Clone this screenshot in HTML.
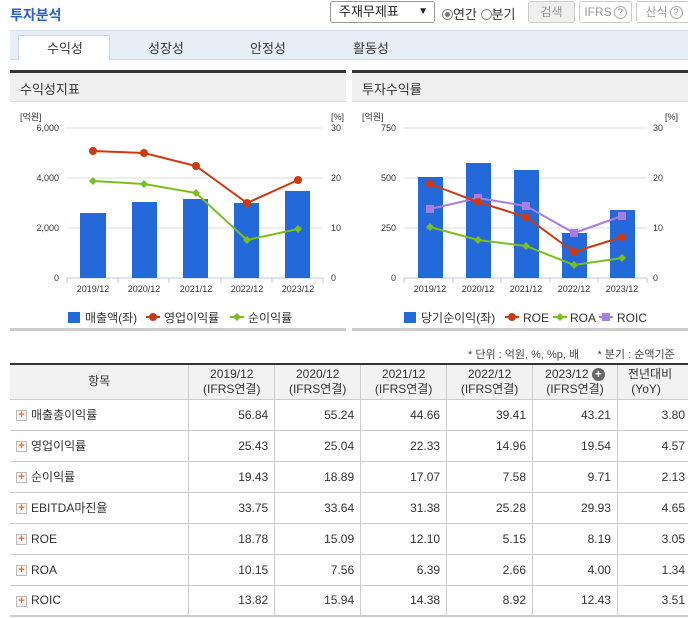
<!DOCTYPE html>
<html><head><meta charset="utf-8"><style>
*{margin:0;padding:0;box-sizing:border-box}
body{width:688px;height:618px;overflow:hidden;background:#fff;font-family:"Liberation Sans","Noto Sans CJK KR",sans-serif;color:#333;position:relative;font-size:12px}
.a{position:absolute}
.btn{position:absolute;top:1px;height:22px;border:1px solid #ccc;border-radius:3px;font-size:12px;color:#999;line-height:20px;text-align:center;background:#fff}
.q{display:inline-block;width:13px;height:13px;border:1px solid #aaa;border-radius:50%;font-size:9px;line-height:11px;color:#888;vertical-align:middle;margin-left:2px}
table{position:absolute;left:10px;top:363px;border-collapse:collapse;width:690px;font-size:12px}
td,th{border:1px solid #ccc;height:31px;padding:0 6px;color:#333}
th{background:#f2f2f2;font-weight:normal;height:35px;line-height:15px;font-size:12px}
td.n{text-align:right}
tr:first-child th{border-top:2px solid #333}
tr:last-child td{border-bottom:2px solid #ccc}
td:first-child,th:first-child{border-left:none}
.pl{display:inline-block;width:11px;height:11px;border:1px solid #bbb;background:#f6f6f6;color:#f26a1b;font-size:11px;line-height:9px;text-align:center;font-weight:bold;vertical-align:middle;margin-right:4px}
</style></head><body>
<div class="a" style="left:10px;top:5px;font-size:14px;font-weight:bold;color:#2a62c9">투자분석</div>
<div class="a" style="left:330px;top:1px;width:105px;height:22px;border:1px solid #999;border-radius:3px;font-size:13px;line-height:20px;padding-left:8px;color:#222">주재무제표<span style="position:absolute;right:6px;font-size:10px">▼</span></div>
<div class="a" style="left:442px;top:4px;font-size:13px;color:#333"><span style="display:inline-block;width:11px;height:11px;border:1px solid #888;border-radius:50%;background:radial-gradient(#777 35%,#fff 45%);vertical-align:-1px"></span>연간 <span style="display:inline-block;width:11px;height:11px;border:1px solid #888;border-radius:50%;vertical-align:-1px"></span>분기</div>
<div class="btn" style="left:528px;width:47px;background:#efefef">검색</div>
<div class="btn" style="left:579px;width:53px">IFRS<span class="q">?</span></div>
<div class="btn" style="left:636px;width:56px">산식<span class="q">?</span></div>
<div class="a" style="left:10px;top:30px;width:678px;height:30px;background:#e8eef8;border-top:1px solid #d8e0ee;border-bottom:1px solid #ccd6e6"></div>
<div class="a" style="left:18px;top:35px;width:92px;height:26px;background:#fff;border:1px solid #ccd6e6;border-bottom:none"></div>
<div class="a" style="left:47px;top:38px;font-size:13px">수익성</div>
<div class="a" style="left:148px;top:38px;font-size:13px">성장성</div>
<div class="a" style="left:250px;top:38px;font-size:13px">안정성</div>
<div class="a" style="left:353px;top:38px;font-size:13px">활동성</div>
<div class="a" style="left:10px;top:70px;width:336px;height:32px;border-top:3px solid #333;background:#f0f0f0;border-bottom:1px solid #ddd;font-size:13px;padding:6px 0 0 10px">수익성지표</div>
<div class="a" style="left:352px;top:70px;width:336px;height:32px;border-top:3px solid #333;background:#f0f0f0;border-bottom:1px solid #ddd;font-size:13px;padding:6px 0 0 10px">투자수익률</div>
<div class="a" style="left:10px;top:328px;width:336px;height:3px;background:#ccc"></div>
<div class="a" style="left:352px;top:328px;width:336px;height:3px;background:#ccc"></div>
<svg class="a" style="left:0;top:0" width="688" height="340" font-family="Liberation Sans,Noto Sans CJK KR,sans-serif" font-size="9" fill="#333">
<g stroke="#ddd"><line x1="67" x2="323" y1="128" y2="128"/><line x1="67" x2="323" y1="178" y2="178"/><line x1="67" x2="323" y1="228" y2="228"/>
<line x1="404" x2="647" y1="128" y2="128"/><line x1="404" x2="647" y1="178" y2="178"/><line x1="404" x2="647" y1="228" y2="228"/></g>
<g stroke="#b8c8dc"><line x1="67" x2="323" y1="278" y2="278"/><line x1="404" x2="647" y1="278" y2="278"/>
<line x1="67" x2="67" y1="278" y2="283"/><line x1="118" x2="118" y1="278" y2="283"/><line x1="169" x2="169" y1="278" y2="283"/><line x1="221" x2="221" y1="278" y2="283"/><line x1="272" x2="272" y1="278" y2="283"/><line x1="323" x2="323" y1="278" y2="283"/>
<line x1="404" x2="404" y1="278" y2="283"/><line x1="453" x2="453" y1="278" y2="283"/><line x1="501" x2="501" y1="278" y2="283"/><line x1="550" x2="550" y1="278" y2="283"/><line x1="598" x2="598" y1="278" y2="283"/><line x1="647" x2="647" y1="278" y2="283"/></g>
<g fill="#2469d9"><rect x="80" y="213" width="26" height="65"/><rect x="132" y="202" width="25" height="76"/><rect x="183" y="199" width="25" height="79"/><rect x="234" y="203" width="25" height="75"/><rect x="285" y="191" width="25" height="87"/>
<rect x="418" y="177" width="25" height="101"/><rect x="466" y="163" width="25" height="115"/><rect x="514" y="170" width="25" height="108"/><rect x="562" y="233" width="25" height="45"/><rect x="610" y="210" width="25" height="68"/></g>
<polyline points="93,151 144,153 196,166 247,203 298,180" fill="none" stroke="#d0380f" stroke-width="2"/>
<g fill="#d0380f"><circle cx="93" cy="151" r="4"/><circle cx="144" cy="153" r="4"/><circle cx="196" cy="166" r="4"/><circle cx="247" cy="203" r="4"/><circle cx="298" cy="180" r="4"/></g>
<polyline points="93,181 144,184 196,193 247,240 298,229" fill="none" stroke="#7cbf1c" stroke-width="2"/>
<g fill="#7cbf1c"><path d="M93 177l4 4-4 4-4-4z"/><path d="M144 180l4 4-4 4-4-4z"/><path d="M196 189l4 4-4 4-4-4z"/><path d="M247 236l4 4-4 4-4-4z"/><path d="M298 225l4 4-4 4-4-4z"/></g>
<polyline points="430,209 478,198 526,206 574,233 622,216" fill="none" stroke="#a87ee0" stroke-width="2"/>
<g fill="#a87ee0"><rect x="426" y="205" width="8" height="8"/><rect x="474" y="194" width="8" height="8"/><rect x="522" y="202" width="8" height="8"/><rect x="570" y="229" width="8" height="8"/><rect x="618" y="212" width="8" height="8"/></g>
<polyline points="430,184 478,202 526,217 574,252 622,237" fill="none" stroke="#d0380f" stroke-width="2"/>
<g fill="#d0380f"><circle cx="430" cy="184" r="4"/><circle cx="478" cy="202" r="4"/><circle cx="526" cy="217" r="4"/><circle cx="574" cy="252" r="4"/><circle cx="622" cy="237" r="4"/></g>
<polyline points="430,227 478,240 526,246 574,265 622,258" fill="none" stroke="#7cbf1c" stroke-width="2"/>
<g fill="#7cbf1c"><path d="M430 223l4 4-4 4-4-4z"/><path d="M478 236l4 4-4 4-4-4z"/><path d="M526 242l4 4-4 4-4-4z"/><path d="M574 261l4 4-4 4-4-4z"/><path d="M622 254l4 4-4 4-4-4z"/></g>
<text x="20" y="120">[억원]</text><text x="331" y="120">[%]</text><text x="362" y="120">[억원]</text><text x="665" y="120">[%]</text>
<g text-anchor="end"><text x="59" y="131">6,000</text><text x="59" y="181">4,000</text><text x="59" y="231">2,000</text><text x="59" y="281">0</text>
<text x="396" y="131">750</text><text x="396" y="181">500</text><text x="396" y="231">250</text><text x="396" y="281">0</text></g>
<text x="331" y="131">30</text><text x="331" y="181">20</text><text x="331" y="231">10</text><text x="331" y="281">0</text>
<text x="653" y="131">30</text><text x="653" y="181">20</text><text x="653" y="231">10</text><text x="653" y="281">0</text>
<g text-anchor="middle"><text x="93" y="292">2019/12</text><text x="144" y="292">2020/12</text><text x="196" y="292">2021/12</text><text x="247" y="292">2022/12</text><text x="298" y="292">2023/12</text>
<text x="430" y="292">2019/12</text><text x="478" y="292">2020/12</text><text x="526" y="292">2021/12</text><text x="574" y="292">2022/12</text><text x="622" y="292">2023/12</text></g>
<g font-size="12">
<rect x="68" y="312" width="12" height="11" fill="#2469d9"/><text x="85" y="322">매출액(좌)</text>
<line x1="146" x2="160" y1="317" y2="317" stroke="#d0380f" stroke-width="2"/><circle cx="153" cy="317" r="4" fill="#d0380f"/><text x="164" y="322">영업이익률</text>
<line x1="230" x2="244" y1="317" y2="317" stroke="#7cbf1c" stroke-width="2"/><path d="M237 313l4 4-4 4-4-4z" fill="#7cbf1c"/><text x="248" y="322">순이익률</text>
<rect x="404" y="312" width="12" height="11" fill="#2469d9"/><text x="421" y="322">당기순이익(좌)</text>
<line x1="505" x2="519" y1="317" y2="317" stroke="#d0380f" stroke-width="2"/><circle cx="512" cy="317" r="4" fill="#d0380f"/><text x="523" y="322">ROE</text>
<line x1="553" x2="567" y1="317" y2="317" stroke="#7cbf1c" stroke-width="2"/><path d="M560 313l4 4-4 4-4-4z" fill="#7cbf1c"/><text x="570" y="322">ROA</text>
<line x1="599" x2="613" y1="317" y2="317" stroke="#a87ee0" stroke-width="2"/><rect x="602" y="313" width="8" height="8" fill="#a87ee0"/><text x="617" y="322">ROIC</text>
</g>
</svg>
<div class="a" style="left:468px;top:346px;font-size:11px;color:#444;white-space:nowrap">* 단위 : 억원, %, %p, 배 &nbsp;&nbsp;&nbsp;&nbsp; * 분기 : 순액기준</div>
<table>
<colgroup><col style="width:179px"><col style="width:86px"><col style="width:86px"><col style="width:86px"><col style="width:86px"><col style="width:85px"><col style="width:82px"></colgroup>
<tr><th>항목</th><th>2019/12<br>(IFRS연결)</th><th>2020/12<br>(IFRS연결)</th><th>2021/12<br>(IFRS연결)</th><th>2022/12<br>(IFRS연결)</th><th>2023/12 <span style="display:inline-block;width:13px;height:13px;border-radius:50%;background:#666;color:#fff;font-size:12px;line-height:13px;font-weight:bold">+</span><br>(IFRS연결)</th><th style="text-align:left;padding-left:10px">전년대비<br>&nbsp;(YoY)</th></tr>
<tr><td><span class="pl">+</span>매출총이익률</td><td class="n">56.84</td><td class="n">55.24</td><td class="n">44.66</td><td class="n">39.41</td><td class="n">43.21</td><td class="n" style="padding-right:14px">3.80</td></tr>
<tr><td><span class="pl">+</span>영업이익률</td><td class="n">25.43</td><td class="n">25.04</td><td class="n">22.33</td><td class="n">14.96</td><td class="n">19.54</td><td class="n" style="padding-right:14px">4.57</td></tr>
<tr><td><span class="pl">+</span>순이익률</td><td class="n">19.43</td><td class="n">18.89</td><td class="n">17.07</td><td class="n">7.58</td><td class="n">9.71</td><td class="n" style="padding-right:14px">2.13</td></tr>
<tr><td><span class="pl">+</span>EBITDA마진율</td><td class="n">33.75</td><td class="n">33.64</td><td class="n">31.38</td><td class="n">25.28</td><td class="n">29.93</td><td class="n" style="padding-right:14px">4.65</td></tr>
<tr><td><span class="pl">+</span>ROE</td><td class="n">18.78</td><td class="n">15.09</td><td class="n">12.10</td><td class="n">5.15</td><td class="n">8.19</td><td class="n" style="padding-right:14px">3.05</td></tr>
<tr><td><span class="pl">+</span>ROA</td><td class="n">10.15</td><td class="n">7.56</td><td class="n">6.39</td><td class="n">2.66</td><td class="n">4.00</td><td class="n" style="padding-right:14px">1.34</td></tr>
<tr><td><span class="pl">+</span>ROIC</td><td class="n">13.82</td><td class="n">15.94</td><td class="n">14.38</td><td class="n">8.92</td><td class="n">12.43</td><td class="n" style="padding-right:14px">3.51</td></tr>
</table>
</body></html>
